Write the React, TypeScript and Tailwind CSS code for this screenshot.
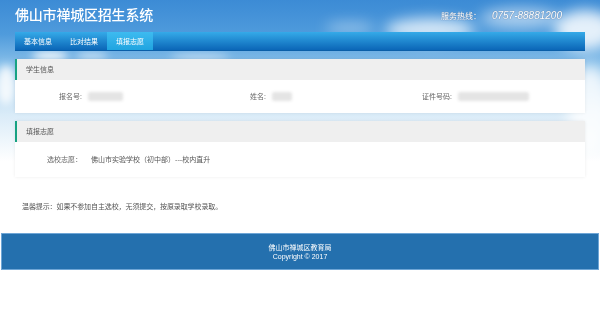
import React from "react";

const tabs = [
  { label: "基本信息", active: false },
  { label: "比对结果", active: false },
  { label: "填报志愿", active: true },
];

const studentFields = [
  { label: "报名号:", labelW: "w-[67px]", valueW: "w-[35px]" },
  { label: "姓名:", labelW: "w-[61px]", valueW: "w-[20px]" },
  { label: "证件号码:", labelW: "w-[57px]", valueW: "w-[71px]" },
];

function Sky() {
  return (
    <svg
      className="absolute left-0 top-0 w-[600px] h-[190px]"
      viewBox="0 0 600 190"
      preserveAspectRatio="none"
    >
      <defs>
        <linearGradient id="skyV" x1="0" y1="0" x2="0" y2="1">
          <stop offset="0" stopColor="#3c8bd5" />
          <stop offset="0.18" stopColor="#4f9bdc" />
          <stop offset="0.35" stopColor="#8ac1ea" />
          <stop offset="0.6" stopColor="#d9ebf8" />
          <stop offset="0.85" stopColor="#ffffff" />
        </linearGradient>
        <filter id="soft" x="-50%" y="-50%" width="200%" height="200%">
          <feGaussianBlur stdDeviation="7" />
        </filter>
        <filter id="soft2" x="-50%" y="-50%" width="200%" height="200%">
          <feGaussianBlur stdDeviation="4" />
        </filter>
      </defs>
      <rect x="0" y="0" width="600" height="190" fill="url(#skyV)" />
      {/* clouds, top right */}
      <g filter="url(#soft)" fill="#ffffff">
        <ellipse cx="430" cy="30" rx="45" ry="12" opacity="0.75" />
        <ellipse cx="520" cy="18" rx="40" ry="10" opacity="0.55" />
        <ellipse cx="585" cy="30" rx="30" ry="20" opacity="0.85" />
        <ellipse cx="350" cy="28" rx="25" ry="6" opacity="0.4" />
        <ellipse cx="590" cy="110" rx="22" ry="45" opacity="0.8" />
      </g>
      {/* clouds, left under the nav */}
      <g filter="url(#soft2)" fill="#ffffff">
        <ellipse cx="50" cy="56" rx="18" ry="5" opacity="0.9" />
        <ellipse cx="92" cy="56" rx="16" ry="4" opacity="0.6" />
        <ellipse cx="6" cy="85" rx="10" ry="20" opacity="0.85" />
        <ellipse cx="200" cy="57" rx="30" ry="4" opacity="0.5" />
      </g>
    </svg>
  );
}

function PanelHeader({ title }: { title: string }) {
  return (
    <div className="h-[21px] flex items-center bg-[#efefef] border-l-2 border-[#17a283] pl-[9px] text-[7px] text-[#555]">
      {title}
    </div>
  );
}

export default function App() {
  return (
    <div className="relative w-[600px] h-[315px] overflow-hidden bg-white font-['Noto_Sans_CJK_SC',sans-serif] text-[#555]">
      <Sky />

      <div className="relative">
        {/* Header */}
        <div className="h-[32px] flex justify-between">
          <div className="pl-[15px] pt-[4px] text-[14px] leading-[20px] text-white font-medium tracking-[-0.2px]">
            佛山市禅城区招生系统
          </div>
          <div className="pr-[38px] pt-[8px] flex items-baseline text-white italic [text-shadow:0_0_1px_#5c7ea6,0_0_1px_#5c7ea6]">
            <span className="text-[8px] not-italic">服务热线：</span>
            <span className="ml-[11px] text-[10px] font-['Liberation_Sans',sans-serif]">
              0757-88881200
            </span>
          </div>
        </div>

        {/* Nav */}
        <div className="mx-[15px] h-[19px] flex bg-gradient-to-b from-[#35aae8] to-[#0b66b7] border-b border-[#0a5ea8]">
          {tabs.map((t) => (
            <div
              key={t.label}
              className={
                t.active
                  ? "h-full px-[9px] flex items-center text-[7px] text-white bg-gradient-to-b from-[#3dbbf0] to-[#1fa4e0]"
                  : "h-full px-[9px] flex items-center text-[7px] text-white"
              }
            >
              {t.label}
            </div>
          ))}
        </div>

        {/* Student info */}
        <div className="mx-[15px] mt-[8px] bg-white shadow-[0_0_3px_rgba(0,0,0,0.08)]">
          <PanelHeader title="学生信息" />
          <div className="h-[33px] grid grid-cols-3 items-center text-[7px] text-[#666]">
            {studentFields.map((f) => (
              <div key={f.label} className="flex items-center">
                <div className={`${f.labelW} text-right`}>{f.label}</div>
                <div
                  className={`${f.valueW} ml-[6px] h-[9px] bg-[#e4e4e4] blur-[1.5px] rounded-[2px]`}
                />
              </div>
            ))}
          </div>
        </div>

        {/* Choice */}
        <div className="mx-[15px] mt-[8px] bg-white shadow-[0_0_3px_rgba(0,0,0,0.08)]">
          <PanelHeader title="填报志愿" />
          <div className="h-[35px] flex items-center pl-[32px] text-[7px] text-[#666]">
            <span>选校志愿：</span>
            <span className="ml-[9px] text-[#555]">佛山市实验学校（初中部）---校内直升</span>
          </div>
        </div>

        {/* Tip */}
        <div className="mt-[24px] pl-[22px] text-[7px] text-[#555] leading-[10px] tracking-[-0.1px]">
          温馨提示：如果不参加自主选校，无须提交，按原录取学校录取。
        </div>

        {/* Footer */}
        <div className="mt-[22px] mx-[1px] h-[37px] bg-[#2470ae] border border-[#6fa6d6] flex flex-col items-center justify-center text-[7px] leading-[9px] text-white">
          <div>佛山市禅城区教育局</div>
          <div className="font-['Liberation_Sans',sans-serif]">Copyright © 2017</div>
        </div>
      </div>
    </div>
  );
}
